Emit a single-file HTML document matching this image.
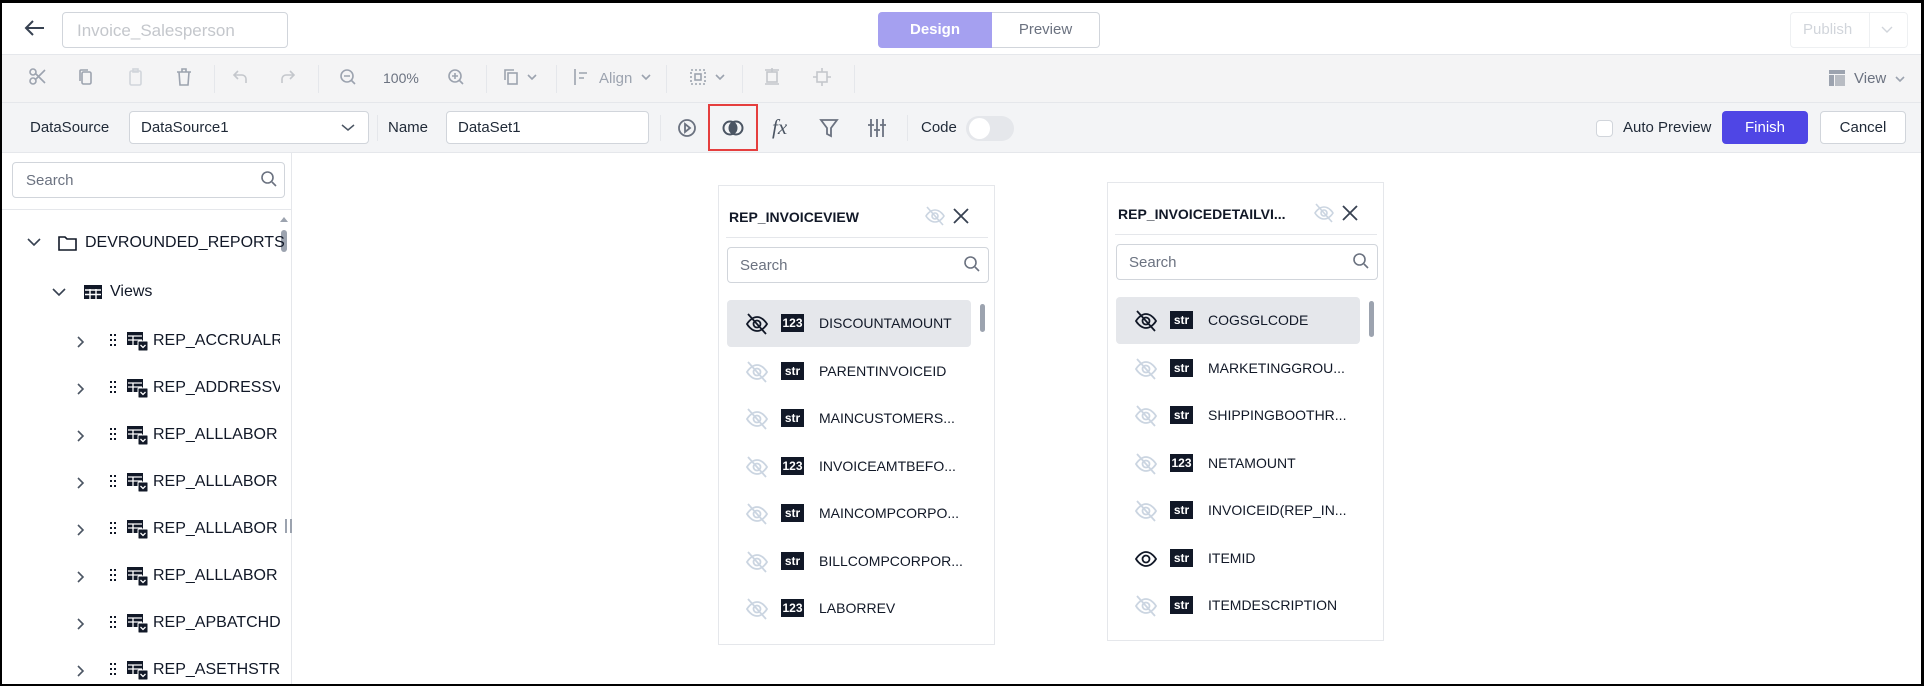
<!DOCTYPE html>
<html><head><meta charset="utf-8"><style>
*{box-sizing:border-box;margin:0;padding:0}
body{width:1924px;height:686px;overflow:hidden;background:#000;font-family:"Liberation Sans",sans-serif;color:#1f2937;font-size:14px;position:relative}
.pg{position:absolute;left:2px;top:3px;width:1919px;height:681px;background:#fff;overflow:hidden}
.a{position:absolute}
.inp{position:absolute;border:1px solid #d1d5db;border-radius:4px;background:#fff}
.ic{position:absolute;stroke:#9ca3af;fill:none;stroke-width:1.6}
.tb{position:absolute;stroke:#6b7280;fill:none;stroke-width:1.8}
.sep{position:absolute;width:1px;background:#e5e7eb}
.row{position:absolute;height:47px;left:8px;width:244px;border-radius:4px}
.row .eye{position:absolute;left:18px;top:12px}
.bd{position:absolute;left:54px;top:14px;width:23px;height:18px;background:#111827;color:#fff;font-size:12px;line-height:18px;text-align:center;font-weight:bold}
.row .t{position:absolute;left:92px;top:15px;font-size:14px;color:#111827;white-space:nowrap}
.tr{position:absolute;font-size:16px;color:#111827;white-space:nowrap}
</style></head><body><div class="pg">
<!-- header -->
<svg class="a" style="left:20px;top:14px" width="26" height="22" viewBox="0 0 26 22"><path d="M22 11H4M11 4L4 11l7 7" stroke="#374151" stroke-width="2" fill="none"/></svg>
<div class="inp" style="left:60px;top:9px;width:226px;height:36px;color:#c4c7cc;font-size:17px;padding:8px 14px">Invoice_Salesperson</div>
<div class="a" style="left:876px;top:9px;width:114px;height:36px;background:#a5a0f0;border-radius:4px 0 0 4px;color:#fff;font-weight:bold;font-size:15px;text-align:center;line-height:36px">Design</div>
<div class="a" style="left:990px;top:9px;width:108px;height:36px;border:1px solid #d1d5db;border-left:none;border-radius:0 4px 4px 0;color:#6b7280;font-size:15px;text-align:center;line-height:34px">Preview</div>
<div class="a" style="left:1788px;top:9px;width:118px;height:36px;border:1px solid #eef0f2;border-radius:4px;color:#d1d5db;font-size:15px;line-height:34px;padding-left:12px">Publish</div>
<div class="a" style="left:1867px;top:9px;width:1px;height:36px;background:#eef0f2"></div>
<svg class="a" style="left:1878px;top:22px" width="14" height="10"><path d="M2 2l5 5 5-5" stroke="#d1d5db" stroke-width="1.4" fill="none"/></svg>
<!-- toolbar -->
<div class="a" style="left:0;top:51px;width:1919px;height:49px;background:#f4f4f5;border-top:1px solid #e5e7eb;border-bottom:1px solid #e5e7eb"></div>
<svg class="ic" style="left:26px;top:64px" width="20" height="20"><circle cx="5" cy="14" r="3"/><circle cx="5" cy="5" r="3"/><path d="M7 6l10 10M7 13L17 3"/></svg>
<svg class="ic" style="left:74px;top:64px" width="20" height="20"><rect x="6" y="5" width="9" height="12" rx="1.5"/><path d="M4 14V4a1 1 0 011-1h7"/></svg>
<svg class="ic" style="left:124px;top:64px;stroke:#d1d5db" width="20" height="20"><rect x="4" y="4" width="11" height="14" rx="1.5"/><rect x="7" y="2" width="5" height="3"/></svg>
<svg class="ic" style="left:172px;top:64px" width="20" height="20"><path d="M3 5h14M8 5V2h4v3M5 5l1 13h8l1-13"/></svg>
<div class="sep" style="left:212px;top:62px;height:28px"></div>
<svg class="ic" style="left:228px;top:64px;stroke:#c4c7cc" width="20" height="20"><path d="M8 4L4 8l4 4M4 8h8a4 4 0 014 4v4"/></svg>
<svg class="ic" style="left:276px;top:64px;stroke:#c4c7cc" width="20" height="20"><path d="M12 4l4 4-4 4M16 8H8a4 4 0 00-4 4v4"/></svg>
<div class="sep" style="left:316px;top:62px;height:28px"></div>
<svg class="ic" style="left:336px;top:64px" width="20" height="20"><circle cx="9" cy="9" r="6"/><path d="M6 9h6M13.5 13.5L17 17"/></svg>
<div class="a" style="left:381px;top:67px;font-size:14px;color:#6b7280">100%</div>
<svg class="ic" style="left:444px;top:64px" width="20" height="20"><circle cx="9" cy="9" r="6"/><path d="M6 9h6M9 6v6M13.5 13.5L17 17"/></svg>
<div class="sep" style="left:484px;top:62px;height:28px"></div>
<svg class="ic" style="left:500px;top:64px" width="40" height="20"><rect x="6" y="6" width="9" height="11"/><path d="M3 13V3h9M26 8l4 4 4-4"/></svg>
<div class="sep" style="left:554px;top:62px;height:28px"></div>
<svg class="ic" style="left:570px;top:64px" width="24" height="20"><path d="M3 2v16M7 6h8M7 11h5"/></svg>
<div class="a" style="left:597px;top:67px;color:#9ca3af;font-size:15px">Align</div>
<svg class="ic" style="left:638px;top:70px" width="14" height="10"><path d="M2 2l4 4 4-4"/></svg>
<div class="sep" style="left:664px;top:62px;height:28px"></div>
<svg class="ic" style="left:686px;top:64px" width="44" height="20"><rect x="3" y="3" width="14" height="14" stroke-dasharray="2 2"/><rect x="7" y="7" width="6" height="6"/><path d="M28 8l4 4 4-4"/></svg>
<div class="sep" style="left:740px;top:62px;height:28px"></div>
<svg class="ic" style="left:760px;top:64px;stroke:#c4c7cc" width="20" height="20"><rect x="5" y="5" width="10" height="10"/><path d="M3 3h14M3 17h14M10 1v4"/></svg>
<svg class="ic" style="left:810px;top:64px;stroke:#c4c7cc" width="20" height="20"><rect x="5" y="5" width="10" height="10"/><path d="M1 10h4M15 10h4M10 1v4M10 15v4"/></svg>
<div class="sep" style="left:852px;top:62px;height:28px"></div>
<svg class="a" style="left:1826px;top:66px" width="18" height="18"><rect x="1" y="1" width="16" height="4" fill="#9ca3af"/><rect x="1" y="6" width="5" height="11" fill="#9ca3af"/><rect x="7" y="6" width="10" height="11" fill="#b8bcc3"/></svg>
<div class="a" style="left:1852px;top:67px;color:#6b7280;font-size:15px">View</div>
<svg class="ic" style="left:1892px;top:72px" width="14" height="10"><path d="M2 2l4 4 4-4"/></svg>
<!-- dataset row -->
<div class="a" style="left:0;top:100px;width:1919px;height:50px;background:#f3f4f6;border-bottom:1px solid #e5e7eb"></div>
<div class="a" style="left:28px;top:116px;font-size:15px">DataSource</div>
<div class="inp" style="left:127px;top:108px;width:240px;height:33px;padding:7px 11px;font-size:15px">DataSource1</div>
<svg class="a" style="left:338px;top:120px" width="16" height="10"><path d="M2 2l6 5 6-5" stroke="#4b5563" stroke-width="1.5" fill="none"/></svg>
<div class="sep" style="left:375px;top:112px;height:26px"></div>
<div class="a" style="left:386px;top:116px;font-size:15px">Name</div>
<div class="inp" style="left:444px;top:108px;width:203px;height:33px;padding:7px 11px;font-size:15px">DataSet1</div>
<div class="sep" style="left:658px;top:112px;height:26px"></div>
<svg class="tb" style="left:674px;top:114px" width="22" height="22"><circle cx="11" cy="11" r="8"/><path d="M9 7l5 4-5 4z"/></svg>
<div class="a" style="left:706px;top:101px;width:50px;height:47px;border:2px solid #e53e3e"></div>
<svg class="a" style="left:719px;top:114px" width="24" height="22"><circle cx="9" cy="11" r="6.5" fill="none" stroke="#4b5563" stroke-width="2"/><circle cx="15" cy="11" r="6.5" fill="none" stroke="#4b5563" stroke-width="2"/><path d="M12 5.5a6.5 6.5 0 010 11a6.5 6.5 0 010-11z" fill="#4b5563"/></svg>
<div class="a" style="left:770px;top:112px;font-family:'Liberation Serif',serif;font-style:italic;font-size:21px;color:#4b5563">fx</div>
<svg class="tb" style="left:816px;top:114px" width="22" height="22"><path d="M3 3h16l-6 8v8l-4-2v-6z"/></svg>
<svg class="tb" style="left:864px;top:114px" width="22" height="22"><path d="M5 2v18M11 2v18M17 2v18M2 8h6M8 13h6M14 8h6"/></svg>
<div class="sep" style="left:905px;top:112px;height:26px"></div>
<div class="a" style="left:919px;top:116px;font-size:15px">Code</div>
<div class="a" style="left:964px;top:113px;width:48px;height:25px;border-radius:13px;background:#e5e7eb"></div>
<div class="a" style="left:967px;top:115px;width:21px;height:21px;border-radius:50%;background:#fff"></div>
<div class="a" style="left:1594px;top:117px;width:17px;height:17px;border:1px solid #d1d5db;border-radius:4px;background:#fff"></div>
<div class="a" style="left:1621px;top:116px;font-size:15px">Auto Preview</div>
<div class="a" style="left:1720px;top:108px;width:86px;height:33px;background:#4f46e5;border-radius:4px;color:#fff;text-align:center;line-height:33px;font-size:15px">Finish</div>
<div class="a" style="left:1818px;top:108px;width:86px;height:33px;border:1px solid #d1d5db;background:#fff;border-radius:4px;text-align:center;line-height:31px;font-size:15px">Cancel</div>
<!-- left panel -->
<div class="a" style="left:289px;top:150px;width:1px;height:540px;background:#e5e7eb"></div>
<div class="inp" style="left:10px;top:159px;width:273px;height:36px;padding:9px 13px;color:#6b7280;font-size:15px">Search</div>
<svg class="a" style="left:258px;top:167px" width="18" height="18"><circle cx="7.5" cy="7.5" r="5.5" stroke="#6b7280" stroke-width="1.6" fill="none"/><path d="M12 12l4 4" stroke="#6b7280" stroke-width="1.6"/></svg>
<div class="a" style="left:0;top:206px;width:289px;height:1px;background:#e5e7eb"></div>
<div class="a" style="left:279px;top:227px;width:6px;height:22px;border-radius:3px;background:#9ca3af"></div>
<div class="a" style="left:278px;top:214px;width:0;height:0;border-left:4px solid transparent;border-right:4px solid transparent;border-bottom:5px solid #9ca3af"></div>
<div class="a" style="left:283px;top:516px;width:2px;height:14px;background:#9ca3af"></div><div class="a" style="left:288px;top:516px;width:2px;height:14px;background:#9ca3af"></div>
<svg class="a" style="left:24px;top:233px" width="16" height="12"><path d="M2 3l6 6 6-6" stroke="#374151" stroke-width="1.6" fill="none"/></svg>
<svg class="a" style="left:55px;top:230px" width="22" height="20"><path d="M2 4h6l2 2h9v11H2z" stroke="#111827" stroke-width="1.6" fill="none"/></svg>
<div class="tr" style="left:83px;top:231px">DEVROUNDED_REPORTS</div>
<svg class="a" style="left:49px;top:283px" width="16" height="12"><path d="M2 3l6 6 6-6" stroke="#374151" stroke-width="1.6" fill="none"/></svg>
<svg class="a" style="left:81px;top:280px" width="20" height="18"><rect x="1" y="2" width="18" height="14" fill="#111827"/><path d="M2 7h16M2 11.5h16M7 6v10M13 6v10" stroke="#fff" stroke-width="1.4"/></svg>
<div class="tr" style="left:108px;top:280px">Views</div>
<div id="tree"></div>
<!-- table 1 -->
<div class="a" style="left:716px;top:182px;width:277px;height:460px;border:1px solid #e5e7eb;background:#fff">
<div class="a" style="left:10px;top:23px;font-weight:bold;font-size:14px;color:#111827">REP_INVOICEVIEW</div>
<svg class="a" style="left:204px;top:18px" width="24" height="24"><path d="M3 12s3.5-6 9-6 9 6 9 6-3.5 6-9 6-9-6-9-6z" stroke="#cbd5e1" stroke-width="1.6" fill="none"/><circle cx="12" cy="12" r="3" stroke="#cbd5e1" stroke-width="1.6" fill="none"/><path d="M4 3l16 18" stroke="#cbd5e1" stroke-width="1.6"/></svg>
<svg class="a" style="left:232px;top:20px" width="20" height="20"><path d="M3 3l14 14M17 3L3 17" stroke="#374151" stroke-width="1.8"/></svg>
<div class="a" style="left:7px;top:51px;width:262px;height:1px;background:#e5e7eb"></div>
<div class="inp" style="left:8px;top:61px;width:262px;height:36px;padding:9px 12px;color:#6b7280;font-size:15px">Search</div>
<svg class="a" style="left:244px;top:69px" width="18" height="18"><circle cx="7.5" cy="7.5" r="5.5" stroke="#6b7280" stroke-width="1.6" fill="none"/><path d="M12 12l4 4" stroke="#6b7280" stroke-width="1.6"/></svg>
<div class="a" style="left:261px;top:118px;width:5px;height:28px;border-radius:3px;background:#9ca3af"></div>
<div id="t1"></div>
</div>
<!-- table 2 -->
<div class="a" style="left:1105px;top:179px;width:277px;height:459px;border:1px solid #e5e7eb;background:#fff">
<div class="a" style="left:10px;top:23px;font-weight:bold;font-size:14px;color:#111827">REP_INVOICEDETAILVI...</div>
<svg class="a" style="left:204px;top:18px" width="24" height="24"><path d="M3 12s3.5-6 9-6 9 6 9 6-3.5 6-9 6-9-6-9-6z" stroke="#cbd5e1" stroke-width="1.6" fill="none"/><circle cx="12" cy="12" r="3" stroke="#cbd5e1" stroke-width="1.6" fill="none"/><path d="M4 3l16 18" stroke="#cbd5e1" stroke-width="1.6"/></svg>
<svg class="a" style="left:232px;top:20px" width="20" height="20"><path d="M3 3l14 14M17 3L3 17" stroke="#374151" stroke-width="1.8"/></svg>
<div class="a" style="left:7px;top:51px;width:262px;height:1px;background:#e5e7eb"></div>
<div class="inp" style="left:8px;top:61px;width:262px;height:36px;padding:9px 12px;color:#6b7280;font-size:15px">Search</div>
<svg class="a" style="left:244px;top:69px" width="18" height="18"><circle cx="7.5" cy="7.5" r="5.5" stroke="#6b7280" stroke-width="1.6" fill="none"/><path d="M12 12l4 4" stroke="#6b7280" stroke-width="1.6"/></svg>
<div class="a" style="left:261px;top:118px;width:5px;height:36px;border-radius:3px;background:#9ca3af"></div>
<div id="t2"></div>
</div>
<script>
function eye(c,open){if(open)return '<svg class="eye" width="24" height="24"><path d="M2 12s4-7 10-7 10 7 10 7-4 7-10 7-10-7-10-7z" stroke="'+c+'" stroke-width="1.8" fill="none"/><circle cx="12" cy="12" r="3.5" stroke="'+c+'" stroke-width="1.8" fill="none"/></svg>';
return '<svg class="eye" width="24" height="24"><path d="M2 12s4-7 10-7 10 7 10 7-4 7-10 7-10-7-10-7z" stroke="'+c+'" stroke-width="1.8" fill="none"/><circle cx="12" cy="12" r="3.5" stroke="'+c+'" stroke-width="1.8" fill="none"/><path d="M3 2l18 20" stroke="'+c+'" stroke-width="1.8"/></svg>';}
function rows(id,top,list){var h='';list.forEach(function(r,i){var sel=i==0;var c=sel?'#111827':(r[2]?'#111827':'#cbd5e1');
h+='<div class="row" style="top:'+(top+i*47.5)+'px;background:'+(sel?'#e5e7eb':'transparent')+'">'+eye(c,r[2])+'<div class="bd">'+r[0]+'</div><div class="t">'+r[1]+'</div></div>';});
document.getElementById(id).innerHTML=h;}
rows('t1',114,[['123','DISCOUNTAMOUNT'],['str','PARENTINVOICEID'],['str','MAINCUSTOMERS...'],['123','INVOICEAMTBEFO...'],['str','MAINCOMPCORPO...'],['str','BILLCOMPCORPOR...'],['123','LABORREV']]);
rows('t2',114,[['str','COGSGLCODE'],['str','MARKETINGGROU...'],['str','SHIPPINGBOOTHR...'],['123','NETAMOUNT'],['str','INVOICEID(REP_IN...'],['str','ITEMID',1],['str','ITEMDESCRIPTION']]);
var n=['REP_ACCRUALR','REP_ADDRESSV','REP_ALLLABOR','REP_ALLLABOR','REP_ALLLABOR','REP_ALLLABOR','REP_APBATCHD','REP_ASETHSTR'],h='';
n.forEach(function(s,i){var y=327+i*47;
h+='<svg class="a" style="left:74px;top:'+(y+5)+'px" width="10" height="14"><path d="M2 2l5 5-5 5" stroke="#4b5563" stroke-width="1.6" fill="none"/></svg>'+
'<svg class="a" style="left:108px;top:'+(y+3)+'px" width="6" height="16"><g fill="#111827"><rect x="0" y="1" width="2" height="2"/><rect x="4" y="1" width="2" height="2"/><rect x="0" y="6" width="2" height="2"/><rect x="4" y="6" width="2" height="2"/><rect x="0" y="11" width="2" height="2"/><rect x="4" y="11" width="2" height="2"/></g></svg>'+
'<svg class="a" style="left:124px;top:'+(y+1)+'px" width="24" height="22"><rect x="1" y="1" width="16" height="13" fill="#111827"/><path d="M2 5h14M2 9h14M7 5v9" stroke="#fff" stroke-width="1.3"/><rect x="12" y="10" width="10" height="10" rx="1" fill="#111827" stroke="#fff"/><path d="M14.5 14l2.5 2.5 2.5-2.5" stroke="#fff" stroke-width="1.3" fill="none"/></svg>'+
'<div class="tr" style="left:151px;top:'+(y+2)+'px;width:127px;overflow:hidden">'+s+'</div>';});
document.getElementById('tree').innerHTML=h;
</script>
</div></body></html>
